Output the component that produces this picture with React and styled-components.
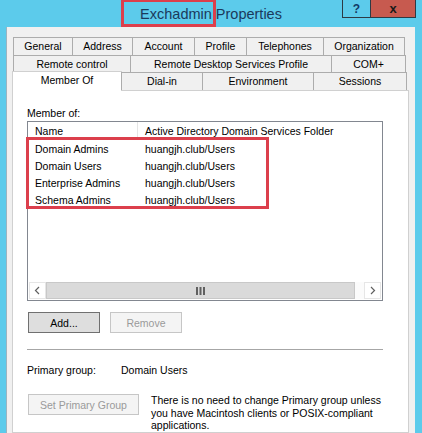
import React from "react";
import styled, { createGlobalStyle } from "styled-components";

const Global = createGlobalStyle`
  html, body { margin: 0; padding: 0; }
  body { font-family: "Liberation Sans", Arial, sans-serif; }
`;

const Window = styled.div`
  width: 422px;
  height: 433px;
  background: #5ccbeb;
  overflow: hidden;
  display: flex;
  flex-direction: column;
`;

const TitleBar = styled.div`
  position: relative;
  height: 27px;
  flex: none;
  display: flex;
  align-items: center;
  justify-content: center;
`;

const Title = styled.div`
  position: relative;
  font-size: 14.5px;
  color: #1b3a5c;
  margin-top: 1px;
`;

const Mark = styled.span`
  position: absolute;
  left: ${(p) => p.$left}px;
  top: ${(p) => p.$top}px;
  width: ${(p) => p.$w}px;
  height: ${(p) => p.$h}px;
  border: 3px solid #dc3f4c;
  box-sizing: border-box;
  pointer-events: none;
`;

const Caption = styled.div`
  position: absolute;
  top: 0;
  right: 6px;
  display: flex;
`;

const CapBtn = styled.div`
  width: ${(p) => p.$w}px;
  height: 18px;
  box-sizing: border-box;
  border: 1px solid #2d3a44;
  border-top: none;
  margin-left: -1px;
  background: ${(p) => (p.$close ? "#c75a4f" : "transparent")};
  color: ${(p) => (p.$close ? "#1a1a1a" : "#123a66")};
  font-weight: 700;
  font-size: ${(p) => (p.$close ? 13 : 12)}px;
  display: flex;
  align-items: center;
  justify-content: center;
`;

const Client = styled.div`
  flex: 1;
  margin: 0 7px 0 6px;
  background: #f0f0f0;
  border-left: 1px solid #9bb4c0;
  padding: 10px 6px 0 5px;
  display: flex;
  flex-direction: column;
`;

const TabRow = styled.div`
  display: flex;
  padding-left: 2px;
  height: ${(p) => p.$h}px;
  position: relative;
  z-index: ${(p) => p.$z || 0};
`;

const Tab = styled.div`
  width: ${(p) => p.$w}px;
  box-sizing: border-box;
  margin-left: -1px;
  border: 1px solid #acacac;
  border-bottom: none;
  background: ${(p) => (p.$active ? "#ffffff" : "#f0f0f0")};
  font-size: 10.5px;
  color: #000;
  display: flex;
  align-items: center;
  justify-content: center;
  padding-bottom: 1px;
  ${(p) =>
    p.$active &&
    `
    margin-left: -2px;
    margin-top: -1px;
    height: 20px;
    align-items: flex-start;
    padding-top: 2px;
    border-color: #d0d0d0;
  `}
`;

const Page = styled.div`
  flex: 1;
  background: #ffffff;
  border: 1px solid #d0d0d0;
  padding: 14px 0 0 14px;
  display: flex;
  flex-direction: column;
  font-size: 10.5px;
  color: #000;
`;

const Label = styled.div`
  height: 16px;
  line-height: 16px;
`;

const ListWrap = styled.div`
  position: relative;
  width: 356px;
  height: 180px;
  box-sizing: border-box;
  border: 1px solid #828790;
  display: flex;
  flex-direction: column;
`;

const HeaderRow = styled.div`
  display: flex;
  height: 18px;
  flex: none;
`;

const Cell = styled.div`
  width: ${(p) => p.$w}px;
  box-sizing: border-box;
  padding-left: 7px;
  white-space: nowrap;
  display: flex;
  align-items: center;
  ${(p) => p.$head && `border-right: 1px solid #e5e5e5;`}
`;

const Rows = styled.div`
  flex: 1;
`;

const Row = styled.div`
  display: flex;
  height: 17px;
`;

const ScrollBar = styled.div`
  display: flex;
  height: 17px;
  flex: none;
  margin: 0 1px 1px 1px;
`;

const Arrow = styled.div`
  width: 17px;
  box-sizing: border-box;
  border: 1px solid #e6e6e6;
  display: flex;
  align-items: center;
  justify-content: center;
  background: #fff;
`;

const Thumb = styled.div`
  width: ${(p) => p.$w}px;
  background: #dadada;
  border: 1px solid #c8c8c8;
  box-sizing: border-box;
  display: flex;
  align-items: center;
  justify-content: center;
`;

const Track = styled.div`
  flex: 1;
  background: #fbfbfb;
`;

const ButtonRow = styled.div`
  display: flex;
  gap: 10px;
  margin-top: 11px;
  padding-left: 1px;
`;

const Button = styled.div`
  width: ${(p) => p.$w}px;
  height: 21px;
  box-sizing: border-box;
  border: 1px solid ${(p) => (p.$disabled ? "#c6c6c6" : "#707070")};
  background: ${(p) => (p.$disabled ? "#f4f4f4" : "#dedede")};
  color: ${(p) => (p.$disabled ? "#9a9a9a" : "#000")};
  display: flex;
  align-items: center;
  justify-content: center;
  font-size: 10.5px;
  flex: none;
`;

const Separator = styled.div`
  width: 356px;
  height: 1px;
  background: #a6a6a6;
  margin-top: 16px;
`;

const InfoRow = styled.div`
  display: flex;
  margin-top: 12px;
  height: 16px;
  align-items: center;
`;

const InfoLabel = styled.div`
  width: 94px;
`;

const NoteRow = styled.div`
  display: flex;
  gap: 12px;
  margin-top: 16px;
  padding-left: 1px;
  align-items: flex-start;
`;

const Note = styled.div`
  width: 236px;
  line-height: 12.5px;
`;

const Chevron = ({ dir }) => (
  <svg width="7" height="9" viewBox="0 0 7 9">
    <path
      d={dir === "left" ? "M5 1 L1.5 4.5 L5 8" : "M2 1 L5.5 4.5 L2 8"}
      fill="none"
      stroke="#606060"
      strokeWidth="1.2"
    />
  </svg>
);

const Grip = () => (
  <svg width="9" height="8" viewBox="0 0 9 8">
    <rect x="0" y="0" width="2" height="8" fill="#606060" />
    <rect x="3.5" y="0" width="2" height="8" fill="#606060" />
    <rect x="7" y="0" width="2" height="8" fill="#606060" />
  </svg>
);

const row1 = [
  ["General", 60],
  ["Address", 61],
  ["Account", 63],
  ["Profile", 53],
  ["Telephones", 78],
  ["Organization", 82],
];
const row2 = [
  ["Remote control", 118],
  ["Remote Desktop Services Profile", 202],
  ["COM+", 75],
];
const row3 = [
  ["Member Of", 110, true],
  ["Dial-in", 82],
  ["Environment", 112],
  ["Sessions", 94],
];

const groups = [
  ["Domain Admins", "huangjh.club/Users"],
  ["Domain Users", "huangjh.club/Users"],
  ["Enterprise Admins", "huangjh.club/Users"],
  ["Schema Admins", "huangjh.club/Users"],
];

export default function App() {
  return (
    <>
      <Global />
      <Window>
        <TitleBar>
          <Title>Exchadmin Properties</Title>
          <Mark $left={121} $top={-1} $w={95} $h={28} />
          <Caption>
            <CapBtn $w={29}>?</CapBtn>
            <CapBtn $w={46} $close>
              x
            </CapBtn>
          </Caption>
        </TitleBar>
        <Client>
          <TabRow $h={18}>
            {row1.map(([t, w]) => (
              <Tab key={t} $w={w}>
                {t}
              </Tab>
            ))}
          </TabRow>
          <TabRow $h={17}>
            {row2.map(([t, w]) => (
              <Tab key={t} $w={w}>
                {t}
              </Tab>
            ))}
          </TabRow>
          <TabRow $h={18} $z={2}>
            {row3.map(([t, w, a]) => (
              <Tab key={t} $w={w} $active={a}>
                {t}
              </Tab>
            ))}
          </TabRow>
          <Page>
            <Label>Member of:</Label>
            <ListWrap>
              <HeaderRow>
                <Cell $w={110} $head>
                  Name
                </Cell>
                <Cell $w={244}>Active Directory Domain Services Folder</Cell>
              </HeaderRow>
              <Rows>
                {groups.map(([n, f]) => (
                  <Row key={n}>
                    <Cell $w={110}>{n}</Cell>
                    <Cell $w={244}>{f}</Cell>
                  </Row>
                ))}
              </Rows>
              <ScrollBar>
                <Arrow>
                  <Chevron dir="left" />
                </Arrow>
                <Thumb $w={309}>
                  <Grip />
                </Thumb>
                <Track />
                <Arrow>
                  <Chevron dir="right" />
                </Arrow>
              </ScrollBar>
              <Mark $left={-2} $top={15} $w={243} $h={72} />
            </ListWrap>
            <ButtonRow>
              <Button $w={72}>Add...</Button>
              <Button $w={72} $disabled>
                Remove
              </Button>
            </ButtonRow>
            <Separator />
            <InfoRow>
              <InfoLabel>Primary group:</InfoLabel>
              <div>Domain Users</div>
            </InfoRow>
            <NoteRow>
              <Button $w={111} $disabled>
                Set Primary Group
              </Button>
              <Note>
                There is no need to change Primary group unless you have
                Macintosh clients or POSIX-compliant applications.
              </Note>
            </NoteRow>
          </Page>
        </Client>
      </Window>
    </>
  );
}
